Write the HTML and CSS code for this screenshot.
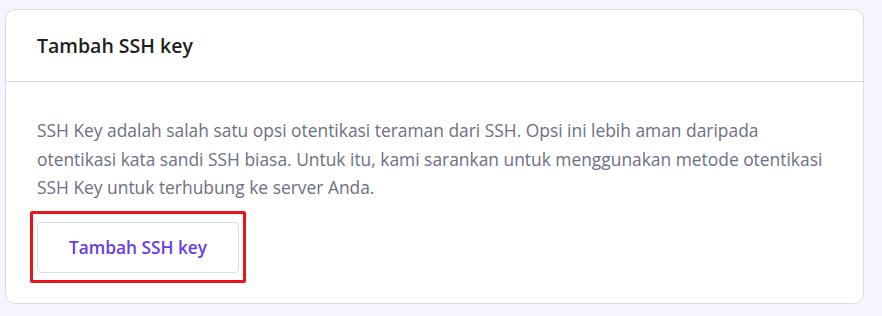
FILE: index.html
```html
<!DOCTYPE html>
<html lang="id">
<head>
<meta charset="utf-8">
<link rel="stylesheet" href="styles.css">
</head>
<body>
<div class="card">
  <div class="card-header">
    <h2 class="card-title">Tambah SSH key</h2>
  </div>
  <div class="card-body">
    <p class="desc">SSH Key adalah salah satu opsi otentikasi teraman dari SSH. Opsi ini lebih aman daripada otentikasi kata sandi SSH biasa. Untuk itu, kami sarankan untuk menggunakan metode otentikasi SSH Key untuk terhubung ke server Anda.</p>
    <div class="action">
      <button class="btn">Tambah SSH key</button>
      <span class="highlight"></span>
    </div>
  </div>
</div>
</body>
</html>
```

FILE: styles.css
```css
html, body {
  margin: 0;
  padding: 0;
  background: #f4f5ff;
}
body {
  padding: 9px 18px 0 5px;
  font-family: "Open Sans", "DejaVu Sans", sans-serif;
}
.card {
  background: #ffffff;
  border: 1px solid #dadce0;
  border-radius: 10px;
  height: 295px;
  box-sizing: border-box;
}
.card-header {
  height: 71px;
  border-bottom: 1px solid #dadce0;
  display: flex;
  align-items: center;
  padding: 0 31px;
}
.card-title {
  margin: 0;
  font-size: 19.5px;
  font-weight: 600;
  color: #1d1e20;
}
.card-body {
  padding: 34px 31px 0;
}
.desc {
  margin: 0;
  font-size: 17.4px;
  line-height: 28.5px;
  color: #6d7081;
  max-width: 786px;
}
.action {
  position: relative;
  display: inline-block;
  margin-top: 20px;
}
.btn {
  display: block;
  width: 202px;
  height: 51px;
  background: #ffffff;
  border: 1px solid #dadce0;
  border-radius: 4px;
  font-family: "Open Sans", "DejaVu Sans", sans-serif;
  font-size: 17.3px;
  font-weight: 600;
  color: #673de6;
  cursor: pointer;
}
.highlight {
  position: absolute;
  top: -11px;
  left: -7px;
  right: -7px;
  bottom: -10px;
  border: 3px solid #e4151b;
  border-radius: 2px;
  pointer-events: none;
}
```
